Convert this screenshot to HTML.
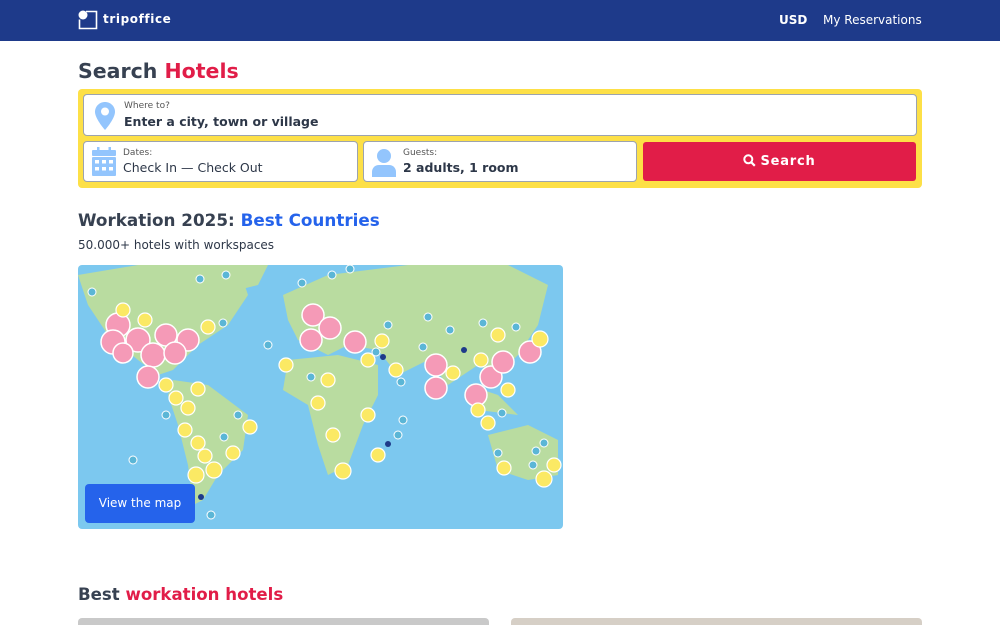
<!DOCTYPE html>
<html><head><meta charset="utf-8"><style>
*{box-sizing:border-box;margin:0;padding:0}
body{width:1000px;height:625px;overflow:hidden;background:#fff;font-family:"DejaVu Sans","Liberation Sans",sans-serif;color:#2d3748;position:relative}
.hdr{position:absolute;left:0;top:0;width:1000px;height:41px;background:#1e3a8a}
.abs{position:absolute}
.box{position:absolute;background:#fff;border:1px solid #9ca3af;border-radius:4px}
.lab{font-size:9px;color:#555;position:absolute}
.val{font-size:12.5px;position:absolute;color:#2d3748}
</style></head><body>
<div class="hdr">
 <svg class="abs" style="left:78px;top:10px" width="20" height="20" viewBox="0 0 20 20"><path d="M8 1.5h10.5v17h-17v-9" fill="none" stroke="#fff" stroke-width="1.6"/><circle cx="5" cy="5" r="4.5" fill="#fff"/></svg>
 <div class="abs" style="left:103px;top:12px;color:#fff;font-weight:bold;font-size:12px;letter-spacing:0.6px">tripoffice</div>
 <div class="abs" style="left:779px;top:13px;color:#fff;font-weight:bold;font-size:12px">USD</div>
 <div class="abs" style="left:823px;top:13px;color:#fff;font-size:12px">My Reservations</div>
</div>
<div class="abs" style="left:78px;top:59px;font-size:20.5px;font-weight:bold;color:#374151">Search <span style="color:#e11d48">Hotels</span></div>
<div class="abs" style="left:78px;top:89px;width:844px;height:99px;background:#fde047;border-radius:4px"></div>
<div class="box" style="left:83px;top:94px;width:834px;height:42px">
 <svg class="abs" style="left:10px;top:6px" width="22" height="30" viewBox="0 0 22 30"><path d="M11 1C5.5 1 1 5.3 1 10.8 1 18 11 29 11 29s10-11 10-18.2C21 5.3 16.5 1 11 1z" fill="#93c5fd"/><circle cx="11" cy="10.5" r="4" fill="#fff"/></svg>
 <div class="lab" style="left:40px;top:6px">Where to?</div>
 <div class="val" style="left:40px;top:19px;font-weight:bold">Enter a city, town or village</div>
</div>
<div class="box" style="left:83px;top:141px;width:275px;height:41px">
 <svg class="abs" style="left:8px;top:5px" width="24" height="30" viewBox="0 0 24 30"><rect x="5" y="0" width="2.5" height="6" fill="#93c5fd"/><rect x="16.5" y="0" width="2.5" height="6" fill="#93c5fd"/><rect x="0" y="3" width="24" height="6" rx="1" fill="#93c5fd"/><rect x="0" y="10" width="24" height="19" rx="1" fill="#93c5fd"/><g fill="#fff"><rect x="3" y="13" width="4" height="3.5"/><rect x="10" y="13" width="4" height="3.5"/><rect x="17" y="13" width="4" height="3.5"/><rect x="3" y="20" width="4" height="3.5"/><rect x="10" y="20" width="4" height="3.5"/><rect x="17" y="20" width="4" height="3.5"/></g></svg>
 <div class="lab" style="left:39px;top:6px">Dates:</div>
 <div class="val" style="left:39px;top:18px">Check In — Check Out</div>
</div>
<div class="box" style="left:363px;top:141px;width:274px;height:41px">
 <svg class="abs" style="left:7px;top:6px" width="26" height="30" viewBox="0 0 26 30"><circle cx="13" cy="8" r="7" fill="#93c5fd"/><path d="M1 29v-5c0-4 3-7 7-7h10c4 0 7 3 7 7v5z" fill="#93c5fd"/></svg>
 <div class="lab" style="left:39px;top:6px">Guests:</div>
 <div class="val" style="left:39px;top:18px;font-weight:bold">2 adults, 1 room</div>
</div>
<div class="abs" style="left:643px;top:142px;width:273px;height:39px;background:#e11d48;border-radius:3px;color:#fff;font-weight:bold;font-size:13px;text-align:center;line-height:40px;letter-spacing:0.8px">
 <svg style="vertical-align:-2px;margin-right:4px" width="13" height="13" viewBox="0 0 13 13"><circle cx="5.3" cy="5.3" r="4" fill="none" stroke="#fff" stroke-width="2"/><path d="M8.3 8.3l3.5 3.5" stroke="#fff" stroke-width="2.2"/></svg>Search</div>
<div class="abs" style="left:78px;top:210px;font-size:16.8px;font-weight:bold;color:#374151">Workation 2025: <span style="color:#2563eb">Best Countries</span></div>
<div class="abs" style="left:78px;top:238px;font-size:12px;color:#2d3748">50.000+ hotels with workspaces</div>
<div class="abs" style="left:78px;top:265px;width:485px;height:264px;border-radius:4px;overflow:hidden;background:#7cc8ef">
<svg width="486" height="264" viewBox="0 0 486 264">
 <g fill="#b9dca0">
  <path d="M0 10 L60 0 L160 0 L170 30 L150 60 L120 80 L95 105 L80 110 L60 95 L30 70 L10 40Z"/>
  <path d="M150 0 L190 0 L180 20 L160 25Z"/>
  <path d="M95 115 L130 120 L170 150 L165 185 L140 210 L125 235 L115 240 L110 200 L100 160 L90 130Z"/>
  <path d="M205 30 L250 10 L330 0 L430 0 L470 20 L460 60 L440 90 L420 110 L400 100 L370 120 L350 95 L320 110 L300 85 L270 80 L250 90 L220 75 L210 55Z"/>
  <path d="M210 95 L260 90 L300 100 L300 130 L285 160 L270 200 L250 210 L240 180 L230 140 L205 125Z"/>
  <path d="M410 170 L450 160 L480 175 L480 210 L450 215 L420 205Z"/>
  <path d="M390 120 L420 130 L440 150 L400 145Z"/>
 </g>
 <g fill="#f59ab7" stroke="#fff" stroke-width="1.5">
  <circle cx="40" cy="60" r="12"/><circle cx="35" cy="77" r="12"/><circle cx="60" cy="75" r="12"/><circle cx="88" cy="70" r="11"/><circle cx="110" cy="75" r="11"/><circle cx="75" cy="90" r="12"/><circle cx="97" cy="88" r="11"/><circle cx="45" cy="88" r="10"/><circle cx="70" cy="112" r="11"/>
  <circle cx="235" cy="50" r="11"/><circle cx="252" cy="63" r="11"/><circle cx="233" cy="75" r="11"/><circle cx="277" cy="77" r="11"/><circle cx="358" cy="100" r="11"/><circle cx="358" cy="123" r="11"/><circle cx="413" cy="112" r="11"/><circle cx="425" cy="97" r="11"/><circle cx="452" cy="87" r="11"/><circle cx="398" cy="130" r="11"/>
 </g>
 <g fill="#fbe964" stroke="#fff" stroke-width="1.2">
  <circle cx="45" cy="45" r="7"/><circle cx="67" cy="55" r="7"/><circle cx="130" cy="62" r="7"/><circle cx="208" cy="100" r="7"/><circle cx="88" cy="120" r="7"/><circle cx="120" cy="124" r="7"/><circle cx="98" cy="133" r="7"/><circle cx="110" cy="143" r="7"/><circle cx="107" cy="165" r="7"/><circle cx="120" cy="178" r="7"/><circle cx="127" cy="191" r="7"/><circle cx="155" cy="188" r="7"/><circle cx="172" cy="162" r="7"/><circle cx="136" cy="205" r="8"/><circle cx="118" cy="210" r="8"/><circle cx="290" cy="95" r="7"/><circle cx="304" cy="76" r="7"/><circle cx="318" cy="105" r="7"/><circle cx="240" cy="138" r="7"/><circle cx="290" cy="150" r="7"/><circle cx="255" cy="170" r="7"/><circle cx="265" cy="206" r="8"/><circle cx="300" cy="190" r="7"/><circle cx="375" cy="108" r="7"/><circle cx="403" cy="95" r="7"/><circle cx="420" cy="70" r="7"/><circle cx="462" cy="74" r="8"/><circle cx="430" cy="125" r="7"/><circle cx="400" cy="145" r="7"/><circle cx="410" cy="158" r="7"/><circle cx="476" cy="200" r="7"/><circle cx="466" cy="214" r="8"/><circle cx="426" cy="203" r="7"/><circle cx="250" cy="115" r="7"/>
 </g>
 <g fill="#5bb6d6" stroke="#fff" stroke-width="1">
  <circle cx="14" cy="27" r="4"/><circle cx="122" cy="14" r="4"/><circle cx="148" cy="10" r="4"/><circle cx="224" cy="18" r="4"/><circle cx="254" cy="10" r="4"/><circle cx="272" cy="4" r="4"/><circle cx="190" cy="80" r="4"/><circle cx="145" cy="58" r="4"/><circle cx="310" cy="60" r="4"/><circle cx="350" cy="52" r="4"/><circle cx="372" cy="65" r="4"/><circle cx="405" cy="58" r="4"/><circle cx="438" cy="62" r="4"/><circle cx="323" cy="117" r="4"/><circle cx="298" cy="87" r="4"/><circle cx="88" cy="150" r="4"/><circle cx="146" cy="172" r="4"/><circle cx="160" cy="150" r="4"/><circle cx="55" cy="195" r="4"/><circle cx="325" cy="155" r="4"/><circle cx="466" cy="178" r="4"/><circle cx="458" cy="186" r="4"/><circle cx="420" cy="188" r="4"/><circle cx="455" cy="200" r="4"/><circle cx="233" cy="112" r="4"/><circle cx="320" cy="170" r="4"/><circle cx="345" cy="82" r="4"/><circle cx="133" cy="250" r="4"/><circle cx="424" cy="148" r="4"/>
 </g>
 <g fill="#1e3a8a"><circle cx="305" cy="92" r="3"/><circle cx="386" cy="85" r="3"/><circle cx="310" cy="179" r="3"/><circle cx="123" cy="232" r="3"/></g>
</svg>
 <div class="abs" style="left:7px;top:219px;width:110px;height:39px;background:#2563eb;border-radius:4px;color:#fff;font-size:12px;text-align:center;line-height:39px">View the map</div>
</div>
<div class="abs" style="left:78px;top:585px;font-size:16.6px;font-weight:bold;color:#374151">Best <span style="color:#e11d48">workation hotels</span></div>
<div class="abs" style="left:78px;top:618px;width:411px;height:7px;background:#c9c9c9;border-radius:4px 4px 0 0"></div>
<div class="abs" style="left:511px;top:618px;width:411px;height:7px;background:#d6cfc6;border-radius:4px 4px 0 0"></div>
</body></html>
